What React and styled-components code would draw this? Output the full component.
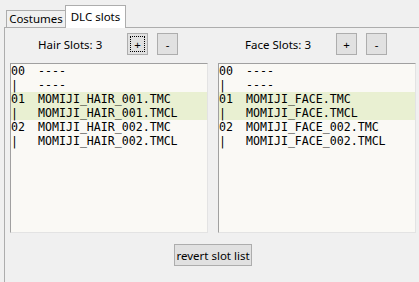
import React from "react";
import styled, { createGlobalStyle } from "styled-components";

const GlobalStyle = createGlobalStyle`
  html, body { margin: 0; padding: 0; background: #f0f0f0; }
  body { font-family: "Noto Sans", "Open Sans", sans-serif; color: #000; }
`;

const Window = styled.div`
  width: 419px;
  height: 282px;
  overflow: hidden;
  padding: 5px 0 0 4px;
  box-sizing: border-box;
  background: #f0f0f0;
`;

const TabStrip = styled.div`
  display: flex;
  align-items: flex-end;
  height: 23px;
  padding-left: 2px;
  margin-bottom: -1px;
  position: relative;
  z-index: 1;
`;

const Tab = styled.div`
  box-sizing: border-box;
  height: ${(p) => (p.$active ? 23 : 18)}px;
  width: ${(p) => p.$w}px;
  margin-left: ${(p) => (p.$first ? 0 : -1)}px;
  border: 1px solid #adadad;
  border-bottom: ${(p) => (p.$active ? "none" : "1px solid #adadad")};
  background: ${(p) => (p.$active ? "#ffffff" : "#f0f0f0")};
  font-size: 11.5px;
  line-height: 1;
  display: flex;
  align-items: center;
  justify-content: center;
  padding-bottom: ${(p) => (p.$active ? 1 : 0)}px;
`;

const Panel = styled.div`
  width: 440px;
  height: 300px;
  border-top: 1px solid #adadad;
  border-left: 1px solid #adadad;
  box-sizing: border-box;
  padding: 5px 0 0 5px;
`;

const Columns = styled.div`
  display: grid;
  grid-template-columns: 198px 198px;
  column-gap: 10px;
`;

const Column = styled.div`
  display: flex;
  flex-direction: column;
  gap: 8px;
`;

const Header = styled.div`
  display: flex;
  align-items: center;
  height: 22px;
  padding-left: ${(p) => p.$pad}px;
`;

const Label = styled.div`
  width: ${(p) => p.$w}px;
  font-size: 11.5px;
  white-space: nowrap;
`;

const SmallButton = styled.button`
  box-sizing: border-box;
  width: 21px;
  height: 22px;
  margin-right: 9px;
  padding: 0;
  background: #e1e1e1;
  border: 1px solid #adadad;
  font-family: "Noto Sans", sans-serif;
  font-size: 11.5px;
  color: #000;
  display: flex;
  align-items: center;
  justify-content: center;
  position: relative;
  &::after {
    content: "";
    display: ${(p) => (p.$focused ? "block" : "none")};
    position: absolute;
    inset: 2px;
    border: 1px dotted #000;
  }
`;

const ListBox = styled.div`
  box-sizing: border-box;
  height: 170px;
  border-top: 1px solid #a0a0a0;
  border-left: 1px solid #a0a0a0;
  border-right: 1px solid #e3e3e3;
  border-bottom: 1px solid #e3e3e3;
  background: #faf9f5;
`;

const Row = styled.div`
  display: flex;
  height: 14px;
  align-items: center;
  background: ${(p) => (p.$hl ? "#e9f0d2" : "transparent")};
  font-family: "DejaVu Sans Mono", "Liberation Mono", monospace;
  font-size: 11.6px;
  line-height: 14px;
  white-space: pre;
`;

const Index = styled.span`
  width: 27px;
  flex: none;
`;

const Footer = styled.div`
  display: flex;
  justify-content: center;
  width: 406px;
  margin-top: 11px;
`;

const WideButton = styled.button`
  box-sizing: border-box;
  width: 78px;
  height: 22px;
  padding: 0;
  background: #e1e1e1;
  border: 1px solid #adadad;
  font-family: "Noto Sans", sans-serif;
  font-size: 11.5px;
  color: #000;
`;

const hairRows = [
  ["00", "----", false],
  ["|", "----", false],
  ["01", "MOMIJI_HAIR_001.TMC", true],
  ["|", "MOMIJI_HAIR_001.TMCL", true],
  ["02", "MOMIJI_HAIR_002.TMC", false],
  ["|", "MOMIJI_HAIR_002.TMCL", false],
];

const faceRows = [
  ["00", "----", false],
  ["|", "----", false],
  ["01", "MOMIJI_FACE.TMC", true],
  ["|", "MOMIJI_FACE.TMCL", true],
  ["02", "MOMIJI_FACE_002.TMC", false],
  ["|", "MOMIJI_FACE_002.TMCL", false],
];

function SlotColumn({ label, rows, pad, labelW, focused }) {
  return (
    <Column>
      <Header $pad={pad}>
        <Label $w={labelW}>{label}</Label>
        <SmallButton $focused={focused}>+</SmallButton>
        <SmallButton>-</SmallButton>
      </Header>
      <ListBox>
        {rows.map(([idx, name, hl], i) => (
          <Row key={i} $hl={hl}>
            <Index>{idx}</Index>
            <span>{name}</span>
          </Row>
        ))}
      </ListBox>
    </Column>
  );
}

export default function App() {
  return (
    <>
      <GlobalStyle />
      <Window>
        <TabStrip>
          <Tab $first $w={60}>Costumes</Tab>
          <Tab $active $w={61}>DLC slots</Tab>
        </TabStrip>
        <Panel>
          <Columns>
            <SlotColumn label="Hair Slots: 3" rows={hairRows} pad={28} labelW={89} focused />
            <SlotColumn label="Face Slots: 3" rows={faceRows} pad={27} labelW={91} />
          </Columns>
          <Footer>
            <WideButton>revert slot list</WideButton>
          </Footer>
        </Panel>
      </Window>
    </>
  );
}
